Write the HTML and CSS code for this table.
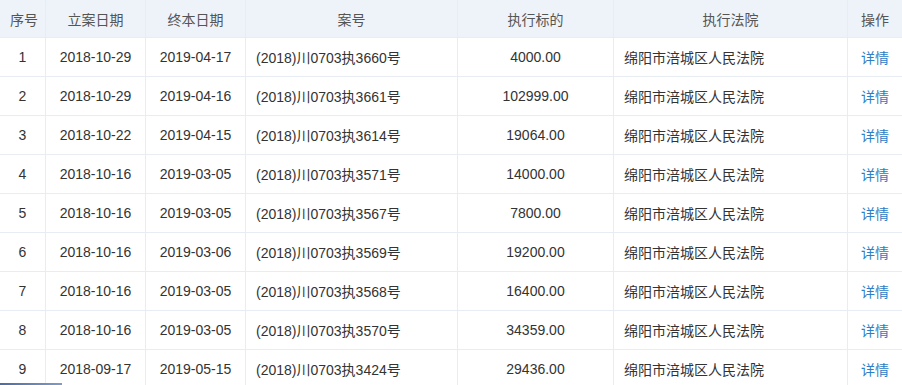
FILE: index.html
```html
<!DOCTYPE html>
<html lang="zh-CN">
<head>
    <meta charset="UTF-8">
    <meta name="viewport" content="width=device-width, initial-scale=1.0">
    <title>终本案件</title>
    <link rel="stylesheet" href="styles.css">
</head>
<body>
<div class="wrap">
    <table class="cases">
        <colgroup>
            <col class="c-no">
            <col class="c-date">
            <col class="c-date">
            <col class="c-case">
            <col class="c-amount">
            <col class="c-court">
            <col class="c-op">
        </colgroup>
        <thead>
            <tr>
                <th>序号</th>
                <th>立案日期</th>
                <th>终本日期</th>
                <th>案号</th>
                <th>执行标的</th>
                <th>执行法院</th>
                <th>操作</th>
            </tr>
        </thead>
        <tbody>
            <tr><td>1</td><td>2018-10-29</td><td>2019-04-17</td><td class="left">(2018)川0703执3660号</td><td>4000.00</td><td class="left">绵阳市涪城区人民法院</td><td><a href="#">详情</a></td></tr>
            <tr><td>2</td><td>2018-10-29</td><td>2019-04-16</td><td class="left">(2018)川0703执3661号</td><td>102999.00</td><td class="left">绵阳市涪城区人民法院</td><td><a href="#">详情</a></td></tr>
            <tr><td>3</td><td>2018-10-22</td><td>2019-04-15</td><td class="left">(2018)川0703执3614号</td><td>19064.00</td><td class="left">绵阳市涪城区人民法院</td><td><a href="#">详情</a></td></tr>
            <tr><td>4</td><td>2018-10-16</td><td>2019-03-05</td><td class="left">(2018)川0703执3571号</td><td>14000.00</td><td class="left">绵阳市涪城区人民法院</td><td><a href="#">详情</a></td></tr>
            <tr><td>5</td><td>2018-10-16</td><td>2019-03-05</td><td class="left">(2018)川0703执3567号</td><td>7800.00</td><td class="left">绵阳市涪城区人民法院</td><td><a href="#">详情</a></td></tr>
            <tr><td>6</td><td>2018-10-16</td><td>2019-03-06</td><td class="left">(2018)川0703执3569号</td><td>19200.00</td><td class="left">绵阳市涪城区人民法院</td><td><a href="#">详情</a></td></tr>
            <tr><td>7</td><td>2018-10-16</td><td>2019-03-05</td><td class="left">(2018)川0703执3568号</td><td>16400.00</td><td class="left">绵阳市涪城区人民法院</td><td><a href="#">详情</a></td></tr>
            <tr><td>8</td><td>2018-10-16</td><td>2019-03-05</td><td class="left">(2018)川0703执3570号</td><td>34359.00</td><td class="left">绵阳市涪城区人民法院</td><td><a href="#">详情</a></td></tr>
            <tr><td>9</td><td>2018-09-17</td><td>2019-05-15</td><td class="left">(2018)川0703执3424号</td><td>29436.00</td><td class="left">绵阳市涪城区人民法院</td><td><a href="#">详情</a></td></tr>
        </tbody>
    </table>
    <div class="scroll-thumb"></div>
</div>
</body>
</html>
```

FILE: styles.css
```css
body {
    margin: 0;
    padding: 0;
    background: #fff;
    font-family: "Liberation Sans", Arial, "Noto Sans CJK SC", sans-serif;
    overflow: hidden;
}

.wrap {
    position: relative;
    width: 902px;
    height: 385px;
    overflow: hidden;
}

.cases {
    width: 903px;
    table-layout: fixed;
    border-collapse: collapse;
    font-size: 14px;
    color: #333;
    margin-left: -1px;
}

.c-no { width: 46px; }
.c-date { width: 100px; }
.c-case { width: 212px; }
.c-amount { width: 156px; }
.c-court { width: 234px; }
.c-op { width: 55px; }

.cases th,
.cases td {
    border: 1px solid #e8edf4;
    text-align: center;
    white-space: nowrap;
    padding: 0 10px;
}

.cases th {
    height: 37px;
    background: #eef3fa;
    color: #555;
    font-weight: normal;
    border-top: none;
}

.cases td {
    height: 38px;
}

.cases td.left {
    text-align: left;
}

.cases a {
    color: #2c80c5;
    text-decoration: none;
}

.scroll-thumb {
    position: absolute;
    left: 0;
    bottom: 0;
    width: 62px;
    height: 2px;
    background: linear-gradient(90deg, #4d6c9e, #7f9cc6);
}
```
